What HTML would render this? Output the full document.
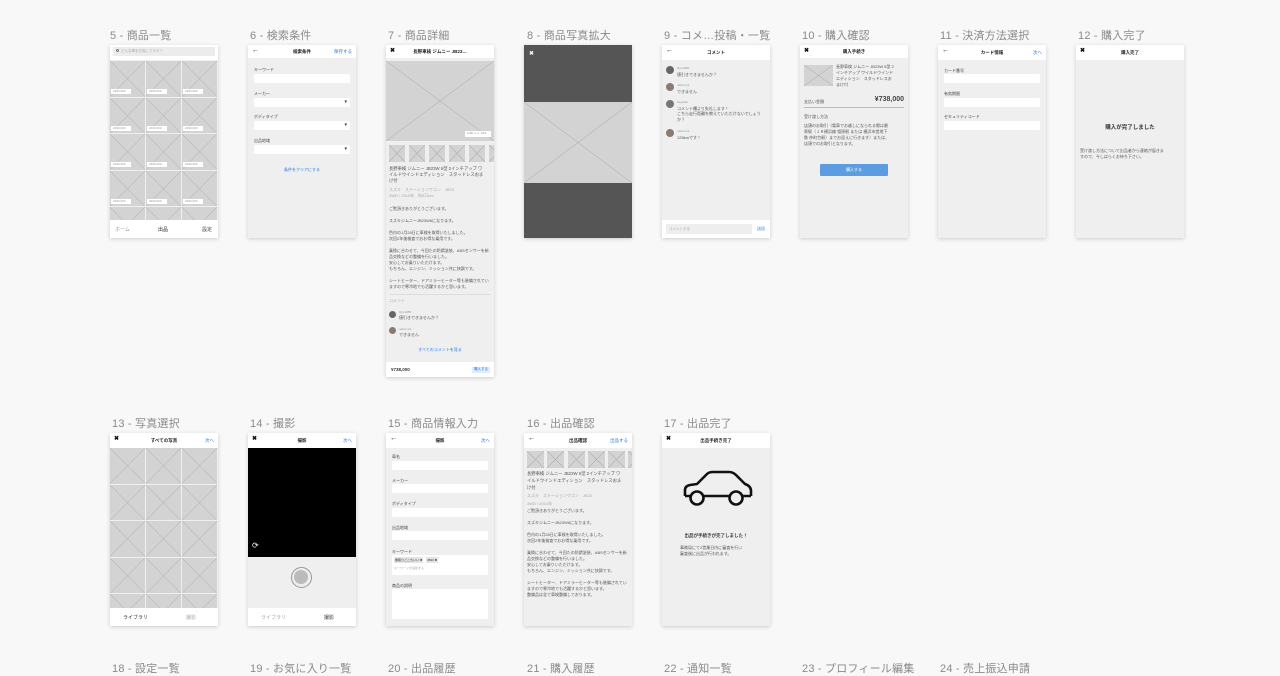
<!DOCTYPE html>
<html><head><meta charset="utf-8">
<style>
*{margin:0;padding:0;box-sizing:border-box}
body{width:1280px;height:670px;overflow:hidden;background:#f8f8f8;font-family:"Liberation Sans","Noto Sans CJK JP",sans-serif;position:relative;color:#333}
.t{position:absolute;font-size:11px;color:#8a8a8a;white-space:nowrap;letter-spacing:.2px}
.b{position:absolute;width:108px;background:#efefef;box-shadow:0 1px 4px rgba(0,0,0,.18);overflow:hidden}
.a{position:absolute;white-space:nowrap}
.hd{position:absolute;left:0;top:0;width:108px;height:13px;background:#fff}
.hd .l{position:absolute;left:4px;top:2px;font-size:7px;font-weight:bold;color:#111}
.hd .c{position:absolute;left:0;right:0;top:4px;text-align:center;font-size:4.5px;font-weight:bold;color:#222}
.hd .r{position:absolute;right:4px;top:4px;font-size:4.5px;color:#2a7ae2}
.lb{position:absolute;left:6px;font-size:4px;color:#444}
.in{position:absolute;left:6px;width:96px;height:9px;background:#fff;border-radius:1px}
.sel:after{content:"▾";position:absolute;right:3px;top:1px;font-size:5px;color:#333}
.x{position:absolute;background:#d3d3d3}
.x svg{position:absolute;left:0;top:0;width:100%;height:100%}
.tx{position:absolute;font-size:4px;color:#555;line-height:6px;white-space:nowrap}
.g{color:#aaa}
.tag{position:absolute;background:#fff;font-size:3px;color:#999;width:20px;height:5px;line-height:5px;padding-left:2px}
.nav{position:absolute;left:0;bottom:0;width:108px;height:18px;background:#fff;font-size:5px}
</style></head><body>

<div class="t" style="left:110px;top:27px">5 - 商品一覧</div>
<div class="t" style="left:250px;top:27px">6 - 検索条件</div>
<div class="t" style="left:388px;top:27px">7 - 商品詳細</div>
<div class="t" style="left:527px;top:27px">8 - 商品写真拡大</div>
<div class="t" style="left:664px;top:27px">9 - コメ…投稿・一覧</div>
<div class="t" style="left:802px;top:27px">10 - 購入確認</div>
<div class="t" style="left:940px;top:27px">11 - 決済方法選択</div>
<div class="t" style="left:1078px;top:27px">12 - 購入完了</div>

<div class="t" style="left:112px;top:415px">13 - 写真選択</div>
<div class="t" style="left:250px;top:415px">14 - 撮影</div>
<div class="t" style="left:388px;top:415px">15 - 商品情報入力</div>
<div class="t" style="left:527px;top:415px">16 - 出品確認</div>
<div class="t" style="left:664px;top:415px">17 - 出品完了</div>

<div class="t" style="left:112px;top:660px">18 - 設定一覧</div>
<div class="t" style="left:250px;top:660px">19 - お気に入り一覧</div>
<div class="t" style="left:388px;top:660px">20 - 出品履歴</div>
<div class="t" style="left:527px;top:660px">21 - 購入履歴</div>
<div class="t" style="left:664px;top:660px">22 - 通知一覧</div>
<div class="t" style="left:802px;top:660px">23 - プロフィール編集</div>
<div class="t" style="left:940px;top:660px">24 - 売上振込申請</div>

<!-- 5 -->
<div class="b" id="b5" style="left:110px;top:45px;height:193px">
 <div class="hd" style="height:15px"><div style="position:absolute;left:3px;top:2px;width:102px;height:9px;background:#ececec;border-radius:1px;font-size:3.5px;color:#aaa;padding:2px 0 0 8px">どんな車をお探しですか？</div><div style="position:absolute;left:6px;top:4px;width:3px;height:3px;border:.6px solid #777;border-radius:50%"></div></div>
 <div class="nav"><span class="a" style="left:5px;top:6px;color:#999">ホーム</span><span class="a" style="left:48px;top:6px;color:#222">出品</span><span class="a" style="left:92px;top:6px;color:#444">設定</span></div>
</div>
<!-- 6 -->
<div class="b" style="left:248px;top:45px;height:193px">
 <div class="hd"><span class="l">←</span><span class="c">検索条件</span><span class="r">保存する</span></div>
 <div class="lb" style="top:22px">キーワード</div><div class="in" style="top:29px"></div>
 <div class="lb" style="top:46px">メーカー</div><div class="in sel" style="top:53px"></div>
 <div class="lb" style="top:69px">ボディタイプ</div><div class="in sel" style="top:76px"></div>
 <div class="lb" style="top:93px">出品地域</div><div class="in sel" style="top:100px"></div>
 <div class="a" style="left:0;right:0;top:122px;text-align:center;font-size:4px;color:#2a7ae2">条件をクリアにする</div>
</div>
<!-- 7 -->
<div class="b" style="left:386px;top:45px;height:332px">
 <div class="hd"><span class="l" style="font-size:6px">✖</span><span class="c">長野車検 ジムニー JB23…</span></div>
 <div class="x" style="left:0;top:16px;width:108px;height:80px"></div>
 <div class="tag" style="left:79px;top:86px;width:26px;height:6px;color:#888">1/10 ∨∨ 1/10</div>
 <div class="x" style="left:3px;top:100px;width:16px;height:17px"></div>
 <div class="x" style="left:23px;top:100px;width:16px;height:17px"></div>
 <div class="x" style="left:43px;top:100px;width:16px;height:17px"></div>
 <div class="x" style="left:63px;top:100px;width:16px;height:17px"></div>
 <div class="x" style="left:83px;top:100px;width:16px;height:17px"></div>
 <div class="x" style="left:103px;top:100px;width:16px;height:17px"></div>
 <div class="tx" style="left:3px;top:121px;font-size:4.3px">長野車検 ジムニー JB23W 6型 2インチアップ ワ<br>イルドウインドエディション　スタッドレスおま<br>け付</div>
 <div class="tx g" style="left:3px;top:142px">スズキ　ステーションワゴン　JB23<br>4WD / 2010年　約8万km</div>
 <div class="tx" style="left:3px;top:161px">ご覧頂きありがとうございます。<br><br>スズキジムニーJB23W6になります。<br><br>色内の1月28日に車検を取得いたしました。<br>次回2年後検査でおお得な乗用です。<br><br>乗換に合わせて、今回たの防錆塗装、ABSセンサーを新<br>品交換などの整備を行いました。<br>安心してお乗りいただけます。<br>もちろん、エンジン、ミッション共に快調です。<br><br>シートヒーター、ドアミラーヒーター等も装備されてい<br>ますので寒冷地でも活躍するかと思います。</div>
 <div style="position:absolute;left:3px;right:3px;top:249px;height:1px;background:#ddd"></div>
 <div class="tx g" style="left:3px;top:253px">コメント</div>
 <div style="position:absolute;left:3px;top:266px;width:7px;height:7px;border-radius:50%;background:#666"></div>
 <div class="tx" style="left:13px;top:264px"><span style="font-size:3px;color:#999">Ryu1988</span><br>値引きできませんか？</div>
 <div style="position:absolute;left:3px;top:282px;width:7px;height:7px;border-radius:50%;background:#8a7a70"></div>
 <div class="tx" style="left:13px;top:281px"><span style="font-size:3px;color:#999">nakimura</span><br>できません</div>
 <div class="a" style="left:0;right:0;top:302px;text-align:center;font-size:4px;color:#2a7ae2">すべてのコメントを見る</div>
 <div style="position:absolute;left:0;bottom:0;width:108px;height:15px;background:#fff"><span class="a" style="left:5px;top:5px;font-size:4.5px;font-weight:bold">¥738,000</span><span class="a" style="left:86px;top:5px;width:18px;height:6px;background:#e0ecfa;font-size:3.5px;color:#2a7ae2;text-align:center">購入する</span></div>
</div>
<!-- 8 -->
<div class="b" style="left:524px;top:45px;height:193px;background:#555">
 <span class="a" style="left:5px;top:5px;font-size:6px;color:#fff">✖</span>
 <div class="x" style="left:0;top:57px;width:108px;height:81px"></div>
</div>
<!-- 9 -->
<div class="b" style="left:662px;top:45px;height:193px">
 <div class="hd" style="height:15px"><span class="l">←</span><span class="c" style="top:5px">コメント</span></div>
 <div style="position:absolute;left:4px;top:21px;width:8px;height:8px;border-radius:50%;background:#666"></div>
 <div class="tx" style="left:15px;top:20px;line-height:5.5px"><span style="font-size:3px;color:#999">Ryu1988</span><br>値引きできませんか？</div>
 <div style="position:absolute;left:4px;top:38px;width:8px;height:8px;border-radius:50%;background:#8a7a70"></div>
 <div class="tx" style="left:15px;top:37px;line-height:5.5px"><span style="font-size:3px;color:#999">nakimura</span><br>できません</div>
 <div style="position:absolute;left:4px;top:55px;width:8px;height:8px;border-radius:50%;background:#777"></div>
 <div class="tx" style="left:15px;top:54px;line-height:5.5px"><span style="font-size:3px;color:#999">sugisaki</span><br>コメント欄より失礼します！<br>こちら走行距離を教えていただけないでしょう<br>か？</div>
 <div style="position:absolute;left:4px;top:84px;width:8px;height:8px;border-radius:50%;background:#8a7a70"></div>
 <div class="tx" style="left:15px;top:83px;line-height:5.5px"><span style="font-size:3px;color:#999">nakimura</span><br>125kmです！</div>
 <div style="position:absolute;left:0;bottom:0;width:108px;height:18px;background:#fff"><div style="position:absolute;left:4px;top:4px;width:86px;height:10px;background:#eee;font-size:3.5px;color:#aaa;padding:3px 0 0 3px">コメントする</div><span class="a" style="left:95px;top:6px;font-size:4px;color:#2a7ae2">送信</span></div>
</div>
<!-- 10 -->
<div class="b" style="left:800px;top:45px;height:193px">
 <div class="hd"><span class="l" style="font-size:6px">✖</span><span class="c">購入手続き</span></div>
 <div class="x" style="left:4px;top:20px;width:29px;height:21px"></div>
 <div class="tx" style="left:36px;top:19px;line-height:6px">長野車検 ジムニー JB23W 6型 2<br>インチアップ ワイルドウインド<br>エディション　スタッドレスお<br>まけ付</div>
 <div class="tx" style="left:4px;top:54px">支払い金額</div>
 <div class="a" style="right:4px;top:51px;font-size:7px;font-weight:bold;color:#444">¥738,000</div>
 <div style="position:absolute;left:4px;right:4px;top:62px;height:1px;background:#bbb"></div>
 <div class="tx" style="left:4px;top:69px">受け渡し方法</div>
 <div class="tx" style="left:4px;top:78px">店頭のお取引（電車でお越しになられる際は最<br>寄駅（ＪＲ横浜線 相原駅 または 横浜市営地下<br>鉄 仲町台駅）までお迎えに行きます）または、<br>店頭でのお取引となります。</div>
 <div class="a" style="left:20px;top:119px;width:68px;height:12px;background:#5b9de0;border-radius:1px;font-size:4px;color:#fff;text-align:center;line-height:12px">購入する</div>
</div>
<!-- 11 -->
<div class="b" style="left:938px;top:45px;height:193px">
 <div class="hd" style="height:15px"><span class="l">←</span><span class="c" style="top:5px">カード情報</span><span class="r" style="top:5px">次へ</span></div>
 <div class="lb" style="top:23px">カード番号</div><div class="in" style="top:29px"></div>
 <div class="lb" style="top:46px">有効期限</div><div class="in" style="top:53px"></div>
 <div class="lb" style="top:69px">セキュリティコード</div><div class="in" style="top:76px"></div>
</div>
<!-- 12 -->
<div class="b" style="left:1076px;top:45px;height:193px">
 <div class="hd" style="height:15px"><span class="l" style="font-size:6px">✖</span><span class="c" style="top:5px">購入完了</span></div>
 <div class="a" style="left:0;right:0;top:78px;text-align:center;font-size:5.5px;font-weight:bold;color:#333">購入が完了しました</div>
 <div class="tx" style="left:4px;top:103px">受け渡し方法について出品者から連絡が届きま<br>すので、今しばらくお待ち下さい。</div>
</div>

<!-- 13 -->
<div class="b" id="b13" style="left:110px;top:433px;height:193px">
 <div class="hd" style="height:15px"><span class="l" style="font-size:6px">✖</span><span class="c" style="top:5px">すべての写真</span><span class="r" style="top:5px">次へ</span></div>
 <div class="nav"><span class="a" style="left:13px;top:6px;color:#333">ライブラリ</span><span class="a" style="left:76px;top:6px;color:#aaa">撮影</span></div>
</div>
<!-- 14 -->
<div class="b" style="left:248px;top:433px;height:193px">
 <div class="hd" style="height:15px"><span class="l" style="font-size:6px">✖</span><span class="c" style="top:5px">撮影</span><span class="r" style="top:5px">次へ</span></div>
 <div style="position:absolute;left:0;top:15px;width:108px;height:109px;background:#000"></div>
 <span class="a" style="left:4px;top:108px;font-size:8px;color:#fff">⟳</span>
 <div style="position:absolute;left:43px;top:134px;width:21px;height:21px;border-radius:50%;border:1.5px solid #999;background:#eee"><div style="position:absolute;left:2px;top:2px;width:14px;height:14px;border-radius:50%;background:#bbb"></div></div>
 <div class="nav"><span class="a" style="left:13px;top:6px;color:#aaa">ライブラリ</span><span class="a" style="left:76px;top:6px;color:#333">撮影</span></div>
</div>
<!-- 15 -->
<div class="b" style="left:386px;top:433px;height:193px">
 <div class="hd" style="height:15px"><span class="l">←</span><span class="c" style="top:5px">撮影</span><span class="r" style="top:5px">次へ</span></div>
 <div class="lb" style="top:21px">車名</div><div class="in" style="top:28px"></div>
 <div class="lb" style="top:45px">メーカー</div><div class="in" style="top:51px"></div>
 <div class="lb" style="top:68px">ボディタイプ</div><div class="in" style="top:75px"></div>
 <div class="lb" style="top:92px">出品地域</div><div class="in" style="top:98px"></div>
 <div class="lb" style="top:116px">キーワード</div>
 <div class="in" style="top:122px;height:20px"><span class="a" style="left:2px;top:2px;background:#e4e4e4;font-size:3px;padding:1px">乗取りごこちいい ✖</span><span class="a" style="left:34px;top:2px;background:#e4e4e4;font-size:3px;padding:1px">JB23 ✖</span><span class="a" style="left:2px;top:11px;font-size:3px;color:#aaa">キーワードを追加する</span></div>
 <div class="lb" style="top:150px">商品の説明</div><div class="in" style="top:156px;height:30px"></div>
</div>
<!-- 16 -->
<div class="b" style="left:524px;top:433px;height:193px">
 <div class="hd" style="height:15px"><span class="l">←</span><span class="c" style="top:5px">出品確認</span><span class="r" style="top:5px">出品する</span></div>
 <div class="x" style="left:3px;top:18px;width:17px;height:17px"></div>
 <div class="x" style="left:23px;top:18px;width:17px;height:17px"></div>
 <div class="x" style="left:44px;top:18px;width:17px;height:17px"></div>
 <div class="x" style="left:64px;top:18px;width:17px;height:17px"></div>
 <div class="x" style="left:84px;top:18px;width:17px;height:17px"></div>
 <div class="x" style="left:104px;top:18px;width:17px;height:17px"></div>
 <div class="tx" style="left:3px;top:37px;font-size:4.3px;line-height:7px">長野車検 ジムニー JB23W 6型 2インチアップ ワ<br>イルドウインドエディション　スタッドレスおま<br>け付</div>
 <div class="tx g" style="left:3px;top:59px;line-height:8px">スズキ　ステーションワゴン　JB23<br>4WD / 2010年</div>
 <div class="tx" style="left:3px;top:75px">ご覧頂きありがとうございます。<br><br>スズキジムニーJB23W6になります。<br><br>色内の1月28日に車検を取得いたしました。<br>次回2年後検査でおお得な乗用です。<br><br>乗換に合わせて、今回たの防錆塗装、ABSセンサーを新<br>品交換などの整備を行いました。<br>安心してお乗りいただけます。<br>もちろん、エンジン、ミッション共に快調です。<br><br>シートヒーター、ドアミラーヒーター等も装備されてい<br>ますので寒冷地でも活躍するかと思います。<br>整備品は全て車検整備しております。</div>
</div>
<!-- 17 -->
<div class="b" style="left:662px;top:433px;height:193px">
 <div class="hd" style="height:15px"><span class="l" style="font-size:6px">✖</span><span class="c" style="top:5px">出品手続き完了</span></div>
 <svg style="position:absolute;left:19px;top:37px" width="72" height="38" viewBox="0 0 72 38"><path d="M4 26 L4 20 Q4 16 9 15 L16 14 L26 4 Q28 2 32 2 L48 2 Q52 2 55 5 L64 14 Q70 16 70 21 L70 26" fill="none" stroke="#111" stroke-width="2.6" stroke-linejoin="round"/><path d="M4 26 L9 26 M23 26 L48 26 M62 26 L70 26" stroke="#111" stroke-width="2.6"/><circle cx="16" cy="28" r="6.5" fill="none" stroke="#111" stroke-width="2.6"/><circle cx="55" cy="28" r="6.5" fill="none" stroke="#111" stroke-width="2.6"/></svg>
 <div class="a" style="left:0;right:0;top:100px;text-align:center;font-size:4.5px;font-weight:bold;color:#333">出品が手続きが完了しました！</div>
 <div class="tx" style="left:18px;top:112px">事務局にて2営業日内に審査を行い<br>審査後に出品が行われます。</div>
</div>

<script>
function grid(id,top,rows,withTag){var b=document.getElementById(id);for(var r=0;r<rows;r++)for(var c=0;c<3;c++){var d=document.createElement('div');d.className='x';d.style.left=(c*36)+'px';d.style.top=(top+r*36.5)+'px';d.style.width='35px';d.style.height='35.5px';b.appendChild(d);if(withTag){var t=document.createElement('div');t.className='tag';t.textContent='¥490,000';t.style.left=(c*36+1)+'px';t.style.top=(top+r*36.5+28)+'px';b.appendChild(t);}}}
grid('b5',16,5,true);grid('b13',15,5,false);
document.querySelectorAll('.nav').forEach(function(n){n.parentNode.appendChild(n)});
document.querySelectorAll('.x').forEach(function(e){e.innerHTML='<svg viewBox="0 0 10 10" preserveAspectRatio="none"><path d="M0 0L10 10M10 0L0 10" stroke="#a8a8a8" stroke-width=".5" vector-effect="non-scaling-stroke" fill="none"/></svg>'});
</script>
</body></html>
